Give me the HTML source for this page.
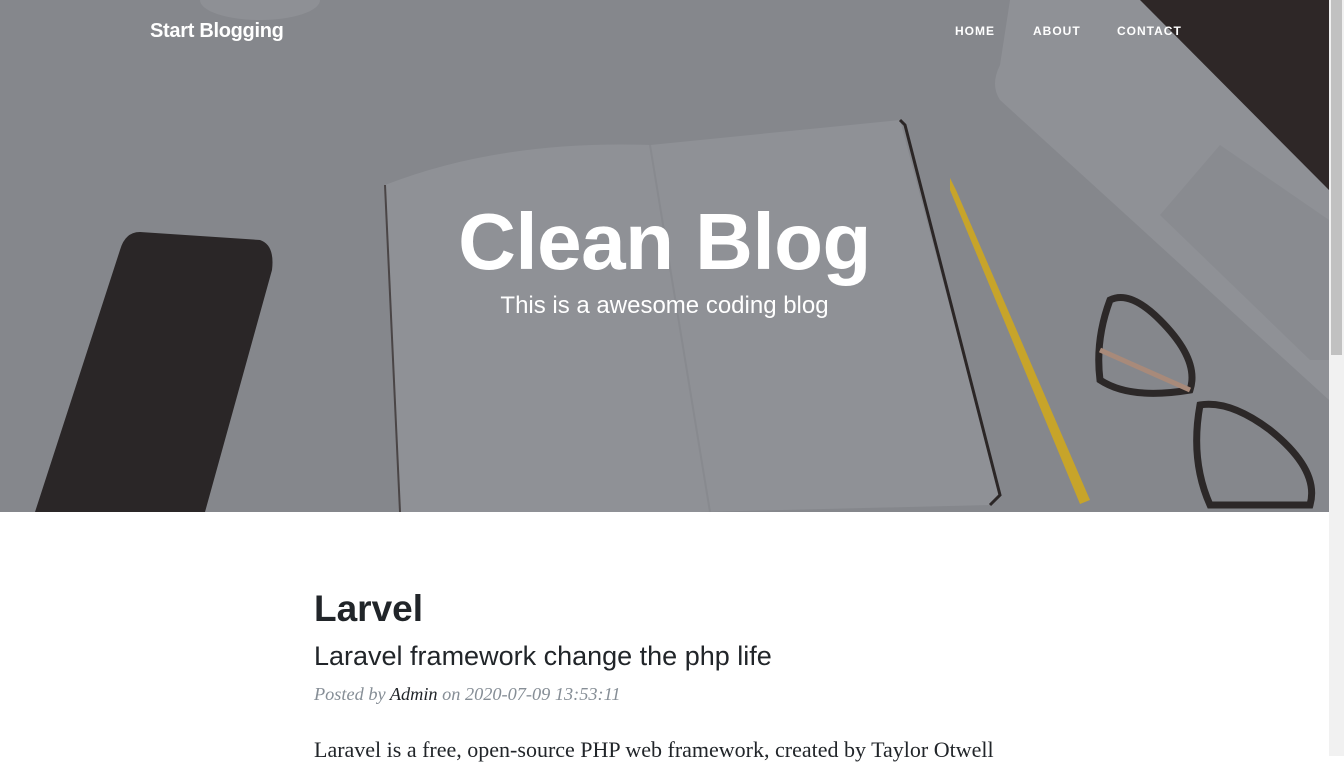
<!DOCTYPE html>
<html><head><style>
*{margin:0;padding:0;box-sizing:border-box}
body{width:1344px;height:756px;overflow:hidden;background:#fff;font-family:"Liberation Sans",sans-serif;position:relative}
.hero{position:absolute;left:0;top:0;width:1329px;height:512px;background:#86888d;overflow:hidden}
.hero svg{position:absolute;left:0;top:0}
.brand{position:absolute;left:150px;top:20px;color:#fff;font-weight:bold;font-size:20px;letter-spacing:-0.3px}
.nav{position:absolute;top:24px;color:#fff;font-weight:bold;font-size:12px;letter-spacing:1px}
h1{position:absolute;left:0;width:1329px;top:196px;text-align:center;color:#fff;font-size:80px;font-weight:bold;letter-spacing:-0.5px}
.sub{position:absolute;left:0;width:1329px;top:292px;text-align:center;color:#fff;font-size:24px;font-weight:300}
.sb{position:absolute;left:1329px;top:0;width:15px;height:756px;background:#f1f1f1}
.sb div{position:absolute;left:2px;top:0;width:11px;height:355px;background:#c1c1c1}
.t{position:absolute;left:314px;color:#212529;white-space:nowrap}
</style></head><body>
<div class="hero">
<svg width="1329" height="512" viewBox="0 0 1329 512">
<rect width="1329" height="512" fill="#85878c"/>
<ellipse cx="260" cy="0" rx="60" ry="20" fill="#8e9095"/>
<path d="M1010 0 L1329 0 L1329 400 L1000 100 Q990 85 1000 65 Z" fill="#8f9196"/>
<path d="M1140 0 L1329 0 L1329 190 Z" fill="#2e2727"/>
<path d="M1160 215 L1220 145 L1329 220 L1329 360 L1310 360 Z" fill="#898b90"/>
<path d="M385 185 Q500 140 650 145 L900 120 L1000 495 L990 505 L700 512 L400 512 Z" fill="#8f9196"/>
<path d="M900 120 L905 125 L1000 495 L990 505" stroke="#2b2626" stroke-width="3" fill="none"/>
<path d="M385 185 L400 512" stroke="#4a4546" stroke-width="2" fill="none"/>
<path d="M650 145 L710 512" stroke="#888a8f" stroke-width="2" fill="none"/>
<path d="M140 232 L260 240 Q275 245 272 270 L205 512 L35 512 L120 250 Q125 232 140 232 Z" fill="#2a2627"/>
<path d="M950 178 L956 190 L1090 500 L1080 504 L950 190 Z" fill="#c7a42a"/>
<path d="M1110 300 Q1095 340 1100 380 Q1130 400 1190 390 Q1200 360 1160 320 Q1130 290 1110 300 Z" fill="none" stroke="#2c2828" stroke-width="7"/>
<path d="M1200 405 Q1190 460 1210 505 L1310 505 Q1320 470 1270 430 Q1230 400 1200 405 Z" fill="none" stroke="#2c2828" stroke-width="7"/>
<path d="M1100 350 L1190 390" stroke="#a88a7a" stroke-width="5"/>
</svg>
<div class="brand">Start Blogging</div>
<div class="nav" style="left:955px">HOME</div>
<div class="nav" style="left:1033px">ABOUT</div>
<div class="nav" style="left:1117px">CONTACT</div>
<h1>Clean Blog</h1>
<div class="sub">This is a awesome coding blog</div>
</div>
<div class="t" style="top:588px;font-size:37px;font-weight:bold">Larvel</div>
<div class="t" style="top:641px;font-size:27px;font-weight:300">Laravel framework change the php life</div>
<div class="t" style="top:684px;font-size:18.3px;font-style:italic;font-family:'Liberation Serif',serif;color:#868e96">Posted by <span style="color:#212529">Admin</span> on 2020-07-09 13:53:11</div>
<div class="t" style="top:737px;font-size:22px;font-family:'Liberation Serif',serif">Laravel is a free, open-source PHP web framework, created by Taylor Otwell</div>
<div class="sb"><div></div></div>
</body></html>
